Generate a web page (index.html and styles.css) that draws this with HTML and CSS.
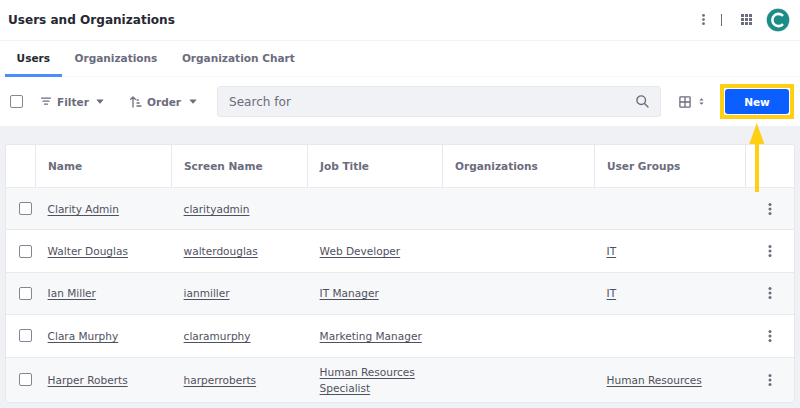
FILE: index.html
```
<!DOCTYPE html>
<html lang="en">
<head>
<meta charset="utf-8">
<title>Users and Organizations</title>
<link rel="stylesheet" href="styles.css">
</head>
<body>
<svg class="sprite" aria-hidden="true">
  <symbol id="dots" viewBox="0 0 12 12"><circle cx="6" cy="1.500" r="1.500"/><circle cx="6" cy="6" r="1.500"/><circle cx="6" cy="10.500" r="1.500"/></symbol>
  <symbol id="caret" viewBox="0 0 8 5"><path d="M1 0.500h6q.8 0 .3.600L4.500 4.200q-.5.500-1 0L.7 1.100Q.2.500 1 .5z"/></symbol>
</svg>
<header class="header">
  <h1 class="title">Users and Organizations</h1>
  <button class="icon-btn header-dots" aria-label="Options"><svg width="11" height="11"><use href="#dots"/></svg></button>
  <span class="divider"></span>
  <button class="icon-btn apps" aria-label="Applications"><svg width="11" height="11" viewBox="0 0 11 11"><path d="M0 0h3v3H0zM4 0h3v3H4zM8 0h3v3H8zM0 4h3v3H0zM4 4h3v3H4zM8 4h3v3H8zM0 8h3v3H0zM4 8h3v3H4zM8 8h3v3H8z"/></svg></button>
  <svg class="avatar" width="24" height="24" viewBox="0 0 24 24"><circle cx="12" cy="12" r="11.900" fill="#e7e7ed"/><circle cx="12" cy="12" r="11.200" fill="#1c8c86"/><path d="M17 7.900A6.100 6.100 0 1 0 17 16.100" fill="none" stroke="#fff" stroke-width="2.600"/></svg>
</header>
<nav class="tabs">
  <a class="tab active">Users</a>
  <a class="tab">Organizations</a>
  <a class="tab">Organization Chart</a>
</nav>
<div class="toolbar">
  <span class="check"></span>
  <button class="menu filter"><svg width="10" height="9" viewBox="0 0 10 9"><path d="M.5 1.200h9M2 4.200h6M3.500 7.200h3" fill="none" stroke="currentColor" stroke-width="1.200" stroke-linecap="round"/></svg><span>Filter</span><svg class="caret" width="8" height="5"><use href="#caret"/></svg></button>
  <button class="menu order"><svg width="12" height="12" viewBox="0 0 12 12"><path d="M3 11V1.300M.7 3.300L3 1l2.300 2.300M7 4h1.200M7 7h2.200M7 10h4" fill="none" stroke="currentColor" stroke-width="1.300" stroke-linecap="round" stroke-linejoin="round"/></svg><span>Order</span><svg class="caret" width="8" height="5"><use href="#caret"/></svg></button>
  <div class="search"><span>Search for</span><svg width="13" height="13" viewBox="0 0 13 13"><path d="M9.500 5.200a4.300 4.300 0 1 1-8.600 0a4.300 4.300 0 1 1 8.600 0zM8.300 8.300L12 12" fill="none" stroke="currentColor" stroke-width="1.400" stroke-linecap="round"/></svg></div>
  <button class="icon-btn view" aria-label="View"><svg width="12" height="12" viewBox="0 0 12 12"><path d="M1.600.9h8.800q.7 0 .7.700v8.800q0 .7-.7.700H1.600q-.7 0-.7-.7V1.600q0-.7.7-.7zM6 1v10M1 6h10" fill="none" stroke="currentColor" stroke-width="1.300"/></svg><svg width="5" height="7" viewBox="0 0 5 7"><path d="M.4 2.600L2.500.2l2.100 2.400zM.4 4.400l2.100 2.400 2.100-2.400z"/></svg></button>
  <div class="new-wrap">
    <button class="new">New</button>
    <svg class="arrow" width="16" height="70" viewBox="0 0 16 70"><path d="M7.800 0L15.300 21H10V69H6V21H.3z"/></svg>
  </div>
</div>
<main class="table">
  <div class="row head"><span></span><span>Name</span><span>Screen Name</span><span>Job Title</span><span>Organizations</span><span>User Groups</span><span></span></div>
  <div class="row"><span><i class="check"></i></span><span><a>Clarity Admin</a></span><span><a>clarityadmin</a></span><span></span><span></span><span></span><span><svg width="12" height="12"><use href="#dots"/></svg></span></div>
  <div class="row"><span><i class="check"></i></span><span><a>Walter Douglas</a></span><span><a>walterdouglas</a></span><span><a>Web Developer</a></span><span></span><span><a>IT</a></span><span><svg width="12" height="12"><use href="#dots"/></svg></span></div>
  <div class="row"><span><i class="check"></i></span><span><a>Ian Miller</a></span><span><a>ianmiller</a></span><span><a>IT Manager</a></span><span></span><span><a>IT</a></span><span><svg width="12" height="12"><use href="#dots"/></svg></span></div>
  <div class="row"><span><i class="check"></i></span><span><a>Clara Murphy</a></span><span><a>claramurphy</a></span><span><a>Marketing Manager</a></span><span></span><span></span><span><svg width="12" height="12"><use href="#dots"/></svg></span></div>
  <div class="row"><span><i class="check"></i></span><span><a>Harper Roberts</a></span><span><a>harperroberts</a></span><span><a>Human Resources Specialist</a></span><span></span><span><a>Human Resources</a></span><span><svg width="12" height="12"><use href="#dots"/></svg></span></div>
</main>
</body>
</html>
```
FILE: styles.css
```
* { box-sizing: border-box; }
body {
  margin: 0;
  height: 408px;
  overflow: hidden;
  background: #f0f1f5;
  color: #6b6c7e;
  font: 10.56px/16px "DejaVu Sans", sans-serif;
}
button { border: 0; margin: 0; padding: 0; background: none; font: inherit; color: inherit; }
svg { display: block; flex: none; fill: currentColor; }
.sprite { display: none; }
.header {
  display: flex;
  align-items: center;
  height: 41px;
  padding: 0 10px 1px 8px;
  background: #fff;
  border-bottom: 1px solid #f1f2f5;
}
.title { flex: 1; margin: 0; color: #272833; font-size: 12.07px; font-weight: 700; }
.icon-btn { display: flex; align-items: center; }
.divider { width: 1px; height: 12px; margin: 0 19px 0 12px; background: #6b6c7e; }
.avatar { margin-left: 14px; }
.tabs {
  display: flex;
  height: 36px;
  padding-left: 5px;
  background: #fff;
  border-bottom: 1px solid #f7f8f9;
  font-weight: 700;
}
.tab { height: 36px; padding: 9px 12px 0; border-bottom: 3px solid transparent; }
.tab + .tab { padding-right: 12.500px; }
.tab.active { padding-left: 11.600px; padding-right: 12.400px; color: #272833; border-color: #4b8dff; }
.toolbar {
  display: flex;
  align-items: center;
  height: 49px;
  padding-left: 10px;
  background: #fff;
}
.check {
  display: block;
  flex: none;
  width: 13px;
  height: 13px;
  border: 1px solid #858694;
  border-radius: 2px;
  background: #fff;
}
.menu { display: flex; align-items: center; font-weight: 700; }
.menu svg + span { margin-left: 6px; }
.caret { margin-left: 7.500px; }
.filter { width: 63px; margin-left: 18px; }
.order { width: 67px; margin-left: 26px; }
.order svg + span { margin-left: 5px; }
.search {
  display: flex;
  align-items: center;
  justify-content: space-between;
  width: 444px;
  height: 31px;
  margin-left: 20px;
  padding: 0 11px;
  border: 1px solid #e7e7ed;
  border-radius: 3px;
  background: #f1f2f5;
  font-size: 12.07px;
}
.view { gap: 8px; margin-left: 18px; }
.new-wrap {
  position: relative;
  width: 74px;
  height: 35px;
  margin-left: 16px;
  padding: 1px;
  border: 4px solid #ffcf14;
}
.new {
  display: block;
  width: 100%;
  height: 100%;
  border-radius: 3px;
  background: #0b5fff;
  color: #fff;
  font-weight: 700;
}
.arrow { position: absolute; left: 25px; top: 35px; fill: #ffcf14; }
.table {
  width: 790px;
  margin: 18px 0 0 5px;
  border: 1px solid #e7e7ed;
  border-radius: 3px;
  overflow: hidden;
  color: #50515f;
}
.row {
  display: grid;
  grid-template-columns: 29px 136px 136px 135px 152px 151px 1fr;
  height: 42.400px;
  background: #fff;
  border-bottom: 1px solid #e9eaef;
}
.row > span { display: flex; align-items: center; padding-left: 12.500px; }
.row > span + span { border-left: 1px solid transparent; padding-left: 11.600px; }
.row:nth-child(even) { background: #f7f8f9; }
.row:last-child { height: 44.400px; border-bottom: 0; }
.row:first-child { height: 43px; }
.row.head { color: #6b6c7e; font-weight: 700; }
.row.head > span + span { border-left-color: #e7e7ed; padding-left: 12px; }
.row > span:last-child { padding-left: 17.600px; color: #6b6c7e; }
.row a { text-decoration: underline 1px; text-underline-offset: 2px; text-decoration-skip-ink: none; }
```
